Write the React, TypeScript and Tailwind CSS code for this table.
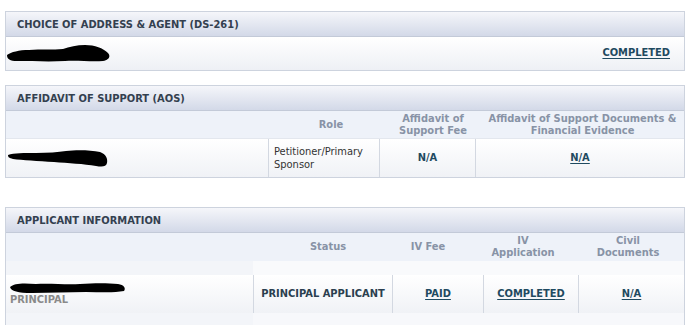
import type { ReactNode } from "react";

// Redaction marks drawn over the applicant names
function Scribble({ variant }: { variant: 1 | 2 | 3 }) {
  if (variant === 1) {
    return (
      <svg width="103" height="18" viewBox="0 0 103 18" aria-hidden>
        <path
          d="M0,10 C4,7 12,5 22,5 C34,4 46,5 56,4 C62,2 70,0 78,0 C88,0 96,3 101,8 C104,11 102,15 96,16 C84,17 70,15 58,16 C42,17 24,16 10,16 C3,16 0,14 0,10 Z"
          fill="#000"
        />
      </svg>
    );
  }
  if (variant === 2) {
    return (
      <svg width="100" height="17" viewBox="0 0 100 17" aria-hidden>
        <path
          d="M0,5 C6,3 16,3 28,3 C40,3 50,2 58,1 C68,0 82,0 92,2 C98,4 100,9 99,13 C98,17 94,17 88,16 C76,14 60,13 46,12 C30,11 14,10 5,9 C1,8 0,7 0,5 Z"
          fill="#000"
        />
      </svg>
    );
  }
  return (
    <svg width="116" height="11" viewBox="0 0 116 11" aria-hidden>
      <path
        d="M0,5 C4,1 14,1 26,2 C40,1 56,3 70,2 C84,1 98,1 108,2 C114,3 116,6 114,9 C104,11 90,10 76,10 C58,10 40,11 22,11 C8,11 1,9 0,5 Z"
        fill="#000"
      />
    </svg>
  );
}

function Section({ title, children }: { title: string; children: ReactNode }) {
  return (
    <section className="border border-[#cdd3de]">
      <div className="flex h-[25px] items-center border-b border-[#c3cad8] bg-gradient-to-b from-[#f5f6fa] to-[#d3d9e8] pl-[11px] pt-[2px] text-[11px] font-bold text-[#33404f]">
        {title}
      </div>
      {children}
    </section>
  );
}

const link = "font-bold text-[#1f4a60] underline underline-offset-2";

export default function App() {
  return (
    <div
      className="h-[325px] w-[686px] overflow-hidden bg-white pl-[5px] pr-[1px] pt-[11px] text-[11px]"
      style={{ fontFamily: '"DejaVu Sans Condensed", "DejaVu Sans", sans-serif' }}
    >
      <Section title="CHOICE OF ADDRESS & AGENT (DS-261)">
        <div className="flex h-[33px] items-center justify-between bg-gradient-to-b from-white to-[#eef0f5] pl-[1px] pr-[14px]">
          <Scribble variant={1} />
          <span className={link}>COMPLETED</span>
        </div>
      </Section>

      <div className="mt-[14px]">
        <Section title="AFFIDAVIT OF SUPPORT (AOS)">
          <div className="grid h-[28px] grid-cols-[273px_104px_100px_1fr] items-center border-b border-[#e3e7ee] bg-[#eef2f9] text-center font-bold leading-[12px] text-[#8893a6]">
            <span />
            <span>Role</span>
            <span>
              Affidavit of
              <br />
              Support Fee
            </span>
            <span className="pr-[2px]">
              Affidavit of Support Documents &amp;
              <br />
              Financial Evidence
            </span>
          </div>
          <div className="grid h-[38px] grid-cols-[262px_111px_96px_1fr] bg-gradient-to-b from-white to-[#f0f2f6]">
            <div className="flex items-center pl-[2px]">
              <Scribble variant={2} />
            </div>
            <div className="flex items-center border-l border-[#d3d8e1] pl-[5px] leading-[13px] text-[#333]">
              Petitioner/Primary
              <br />
              Sponsor
            </div>
            <div className="flex items-center justify-center border-l border-[#d3d8e1] font-bold text-[#1f4a60]">
              N/A
            </div>
            <div className="flex items-center justify-center border-l border-[#d3d8e1]">
              <span className={link}>N/A</span>
            </div>
          </div>
        </Section>
      </div>

      <div className="mt-[29px]">
        <Section title="APPLICANT INFORMATION">
          <div className="grid h-[28px] grid-cols-[257px_130px_70px_120px_90px_1fr] items-center bg-[#eef2f9] text-center font-bold leading-[12px] text-[#8893a6]">
            <span />
            <span>Status</span>
            <span>IV Fee</span>
            <span>
              IV
              <br />
              Application
            </span>
            <span>
              Civil
              <br />
              Documents
            </span>
            <span />
          </div>
          <div className="grid grid-cols-[247px_1fr]">
            <div className="h-[14px] bg-[#f3f5f9]" />
            <div className="h-[14px] bg-[#f9fafc]" />
          </div>
          <div className="grid h-[38px] grid-cols-[247px_139px_91px_95px_1fr] bg-gradient-to-b from-white to-[#f0f2f6]">
            <div className="flex flex-col justify-center pl-[4px]">
              <Scribble variant={3} />
              <span className="mt-[1px] font-bold leading-[12px] text-[#8a8a8a]">PRINCIPAL</span>
            </div>
            <div className="flex items-center justify-center border-l border-[#d3d8e1] font-bold text-[#2b3f4f]">
              PRINCIPAL APPLICANT
            </div>
            <div className="flex items-center justify-center border-l border-[#d3d8e1]">
              <span className={link}>PAID</span>
            </div>
            <div className="flex items-center justify-center border-l border-[#d3d8e1]">
              <span className={link}>COMPLETED</span>
            </div>
            <div className="flex items-center justify-center border-l border-[#d3d8e1]">
              <span className={link}>N/A</span>
            </div>
          </div>
          <div className="grid grid-cols-[247px_1fr]">
            <div className="h-[14px] bg-[#f3f5f9]" />
            <div className="h-[14px] bg-[#f7f8fb]" />
          </div>
        </Section>
      </div>
    </div>
  );
}
